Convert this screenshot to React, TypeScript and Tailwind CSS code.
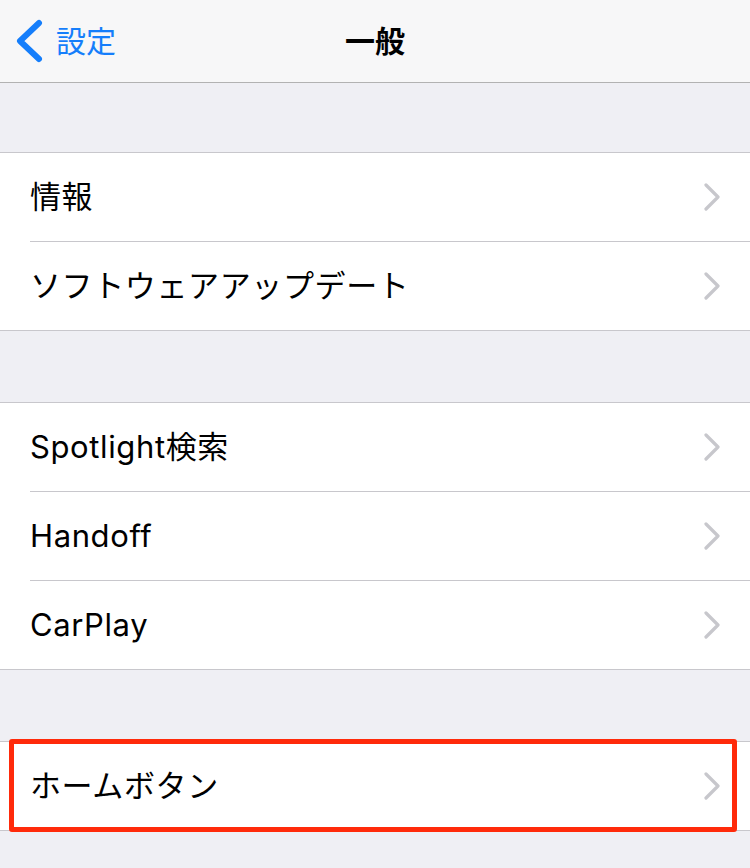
import React from 'react';

const font = { fontFamily: 'Inter, "Noto Sans CJK JP", sans-serif' };

const Chevron = () => (
  <svg width="18" height="28" viewBox="0 0 18 28" className="shrink-0">
    <path d="M3 2 L15 14 L3 26" fill="none" stroke="#c7c7cc" strokeWidth="3.2" strokeLinecap="round" strokeLinejoin="round" />
  </svg>
);

const Row = ({ label, last }: { label: string; last?: boolean }) => (
  <div className="flex flex-col bg-white">
    <div className="flex h-[88px] items-center justify-between pl-[30px] pr-[29px]">
      <span className="text-[31px] text-black tracking-[0.02em]">{label}</span>
      <Chevron />
    </div>
    {!last && <div className="ml-[30px] h-px bg-[#c8c7cc]" />}
  </div>
);

const Group = ({ items }: { items: string[] }) => (
  <div className="flex flex-col border-y border-[#c8c7cc] bg-white">
    {items.map((label, i) => (
      <Row key={label} label={label} last={i === items.length - 1} />
    ))}
  </div>
);

export default function App() {
  return (
    <div className="flex h-[868px] w-[750px] flex-col overflow-hidden bg-[#efeff4]" style={font}>
      {/* Nav bar */}
      <div className="relative flex h-[83px] shrink-0 items-center border-b border-[#b2b2b2] bg-[#f7f7f8]">
        <div className="flex items-center gap-[13px] pl-[15px]">
          <svg width="28" height="44" viewBox="0 0 28 44">
            <path d="M24 4 L5 22 L24 40" fill="none" stroke="#157efb" strokeWidth="6" strokeLinecap="round" strokeLinejoin="round" />
          </svg>
          <span className="text-[30px] text-[#157efb]">設定</span>
        </div>
        <div className="absolute inset-x-0 top-0 flex h-full items-center justify-center pointer-events-none">
          <span className="text-[30px] font-bold text-black">一般</span>
        </div>
      </div>

      <div className="h-[69px] shrink-0" />
      <Group items={['情報', 'ソフトウェアアップデート']} />

      <div className="h-[71px] shrink-0" />
      <Group items={['Spotlight検索', 'Handoff', 'CarPlay']} />

      <div className="h-[71px] shrink-0" />
      <div className="relative">
        <Group items={['ホームボタン']} />
        <div className="absolute left-[9px] right-[13px] -top-[2px] -bottom-[1px] rounded-[3px] border-[5px] border-[#ff2a0a]" />
      </div>
    </div>
  );
}
